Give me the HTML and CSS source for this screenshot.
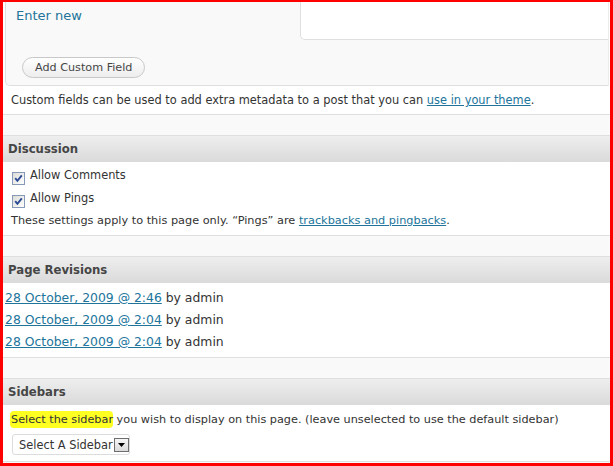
FILE: index.html
```html
<!DOCTYPE html>
<html>
<head>
<meta charset="utf-8">
<title>Edit Page</title>
<link rel="stylesheet" href="styles.css">
</head>
<body>
<div class="frame">
  <div class="postbox cf-box">
    <div class="cf-table">
      <div class="cf-row">
        <div class="cf-name"><a class="enter-new" href="#">Enter new</a></div>
        <div class="cf-value"></div>
      </div>
      <div class="cf-actions"><span class="btn">Add Custom Field</span></div>
    </div>
    <p class="cf-note">Custom fields can be used to add extra metadata to a post that you can <a href="#">use in your theme</a>.</p>
  </div>

  <div class="postbox">
    <h3 class="hndle">Discussion</h3>
    <div class="inside disc">
      <div class="check-row"><span class="cb"><svg width="11" height="11" viewBox="0 0 11 11"><path d="M2.2 5.2 L4.4 7.8 L8.8 2.4" fill="none" stroke="#2b4a94" stroke-width="1.9"/></svg></span>Allow Comments</div>
      <div class="check-row"><span class="cb"><svg width="11" height="11" viewBox="0 0 11 11"><path d="M2.2 5.2 L4.4 7.8 L8.8 2.4" fill="none" stroke="#2b4a94" stroke-width="1.9"/></svg></span>Allow Pings</div>
      <p class="disc-note">These settings apply to this page only. “Pings” are <a href="#">trackbacks and pingbacks</a>.</p>
    </div>
  </div>

  <div class="postbox">
    <h3 class="hndle">Page Revisions</h3>
    <ul class="inside revisions">
      <li><a href="#">28 October, 2009 @ 2:46</a> by admin</li>
      <li><a href="#">28 October, 2009 @ 2:04</a> by admin</li>
      <li><a href="#">28 October, 2009 @ 2:04</a> by admin</li>
    </ul>
  </div>

  <div class="postbox">
    <h3 class="hndle">Sidebars</h3>
    <div class="inside sidebars">
      <p class="sb-text"><span class="marker">Select the sidebar</span> you wish to display on this page. (leave unselected to use the default sidebar)</p>
      <div class="select"><span class="select-text">Select A Sidebar</span><span class="arrow"><svg width="7" height="4" viewBox="0 0 7 4"><path d="M0 0 H7 L3.5 4 Z" fill="#000"/></svg></span></div>
    </div>
  </div>
</div>
</body>
</html>
```

FILE: styles.css
```css
* { box-sizing: border-box; }

html, body {
  margin: 0;
  padding: 0;
  background: #fff;
}

body {
  font-family: "DejaVu Sans", Verdana, sans-serif;
  font-size: 11.4px;
  color: #333;
}

a {
  color: #21759b;
  text-decoration: underline;
}

.frame {
  width: 613px;
  height: 466px;
  border-style: solid;
  border-color: #f00;
  border-width: 2px 3px 3px 3px;
  background: #f9f9f9;
  overflow: hidden;
}

.postbox {
  background: #fff;
  border-top: 1px solid #dfdfdf;
  border-bottom: 1px solid #dfdfdf;
  margin-bottom: 20px;
}

.cf-box {
  border-top: 0;
}

/* custom fields table */
.cf-table {
  margin: 0 1px 0 2px;
  background: #f9f9f9;
  border-left: 1px solid #dfdfdf;
  border-right: 1px solid #ececec;
  border-bottom: 1px solid #dfdfdf;
  border-bottom-left-radius: 5px;
}

.cf-row {
  display: flex;
}

.cf-name {
  width: 294px;
  padding: 6px 0 0 10px;
}

.enter-new {
  font-size: 13px;
  line-height: 16px;
  text-decoration: none;
}

.cf-value {
  flex: 1;
  height: 38px;
  background: #fff;
  border-left: 1px solid #dfdfdf;
  border-bottom: 1px solid #dfdfdf;
  border-bottom-left-radius: 5px;
}

.cf-actions {
  padding: 17px 0 7px 16px;
  height: 45px;
}

.btn {
  display: inline-block;
  height: 21px;
  line-height: 19px;
  padding: 0 12px;
  border: 1px solid #c8c8c8;
  border-radius: 11px;
  background: linear-gradient(to bottom, #ffffff, #ededed);
  color: #464646;
  font-size: 11.2px;
}

.cf-note {
  margin: 0;
  padding: 5px 8px;
  line-height: 18px;
}

/* headers */
.hndle {
  margin: 0;
  height: 26px;
  line-height: 26px;
  padding: 0 5px;
  font-size: 11.7px;
  font-weight: bold;
  color: #464646;
  background: linear-gradient(to bottom, #eeeeee, #dadada);
}

.inside {
  margin: 0;
}

/* discussion */
.disc {
  padding: 2px 8px 3px 8px;
}

.check-row {
  height: 23px;
  line-height: 23px;
  display: flex;
  align-items: center;
  padding-left: 1px;
}

.cb {
  width: 13px;
  height: 13px;
  border: 1px solid #8798b8;
  background: linear-gradient(135deg, #dcdcd7, #ffffff);
  margin: 5px 5px 0 0;
  display: flex;
}

.disc-note {
  margin: 0;
  line-height: 22px;
  font-size: 11.3px;
}

/* revisions */
.revisions {
  list-style: none;
  padding: 4px 2px;
  font-size: 12.4px;
}

.revisions li {
  line-height: 22px;
  height: 22px;
}

/* sidebars */
.sidebars {
  padding: 6px 8px 6px 8px;
}

.sb-text {
  margin: 0;
  line-height: 18px;
  font-size: 11.25px;
}

.marker {
  background: #ffff22;
  border-radius: 4px;
  padding: 2px 0 2px 1px;
  margin-left: -1px;
}

.select {
  margin: 5px 0 0 1px;
  width: 118px;
  height: 21px;
  border: 1px solid #dcdcdc;
  border-radius: 3px;
  background: #fff;
  display: flex;
  align-items: center;
  padding-left: 6px;
}

.select-text {
  flex: 1;
  white-space: nowrap;
  overflow: hidden;
}

.arrow {
  width: 15px;
  height: 14px;
  border: 1px solid #6d6d6d;
  background: linear-gradient(to bottom, #f6f6f6, #dadada);
  display: flex;
  align-items: center;
  justify-content: center;
  margin-right: 0;
  padding-top: 1px;
}
```
